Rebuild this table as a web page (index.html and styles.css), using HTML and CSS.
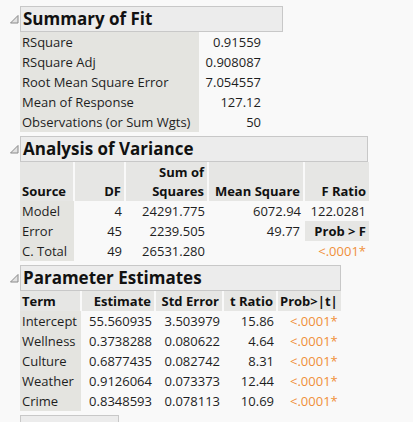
FILE: index.html
```html
<!DOCTYPE html>
<html>
<head>
<meta charset="utf-8">
<link rel="stylesheet" href="styles.css">
</head>
<body>
<div class="report">
  <section class="outline">
    <div class="head">
      <svg class="tri" width="9" height="9" viewBox="0 0 9 9"><polygon points="0.5,8 8,8 8,0.5" /></svg>
      <div class="title w-fit">Summary of Fit</div>
    </div>
    <table class="tbl fit">
      <tr><td class="lab">RSquare</td><td class="num">0.91559</td></tr>
      <tr><td class="lab">RSquare Adj</td><td class="num">0.908087</td></tr>
      <tr><td class="lab">Root Mean Square Error</td><td class="num">7.054557</td></tr>
      <tr><td class="lab">Mean of Response</td><td class="num">127.12</td></tr>
      <tr><td class="lab">Observations (or Sum Wgts)</td><td class="num">50</td></tr>
    </table>
  </section>

  <section class="outline">
    <div class="head">
      <svg class="tri" width="9" height="9" viewBox="0 0 9 9"><polygon points="0.5,8 8,8 8,0.5" /></svg>
      <div class="title w-aov">Analysis of Variance</div>
    </div>
    <table class="tbl aov">
      <tr class="hdr two">
        <th class="c-src left">Source</th>
        <th class="c-df">DF</th>
        <th class="c-ss">Sum of<br>Squares</th>
        <th class="c-ms">Mean Square</th>
        <th class="c-f">F Ratio</th>
      </tr>
      <tr><td class="lab">Model</td><td class="num">4</td><td class="num">24291.775</td><td class="num">6072.94</td><td class="num">122.0281</td></tr>
      <tr><td class="lab">Error</td><td class="num">45</td><td class="num">2239.505</td><td class="num">49.77</td><td class="num boxed">Prob &gt; F</td></tr>
      <tr><td class="lab">C. Total</td><td class="num">49</td><td class="num">26531.280</td><td class="num"></td><td class="num sig">&lt;.0001*</td></tr>
    </table>
  </section>

  <section class="outline">
    <div class="head">
      <svg class="tri" width="9" height="9" viewBox="0 0 9 9"><polygon points="0.5,8 8,8 8,0.5" /></svg>
      <div class="title w-pe">Parameter Estimates</div>
    </div>
    <table class="tbl pe">
      <tr class="hdr">
        <th class="c-term left">Term</th>
        <th class="c-est">Estimate</th>
        <th class="c-se">Std Error</th>
        <th class="c-t">t Ratio</th>
        <th class="c-p">Prob&gt;|t|</th>
      </tr>
      <tr><td class="lab">Intercept</td><td class="num">55.560935</td><td class="num">3.503979</td><td class="num">15.86</td><td class="num sig">&lt;.0001*</td></tr>
      <tr><td class="lab">Wellness</td><td class="num">0.3738288</td><td class="num">0.080622</td><td class="num">4.64</td><td class="num sig">&lt;.0001*</td></tr>
      <tr><td class="lab">Culture</td><td class="num">0.6877435</td><td class="num">0.082742</td><td class="num">8.31</td><td class="num sig">&lt;.0001*</td></tr>
      <tr><td class="lab">Weather</td><td class="num">0.9126064</td><td class="num">0.073373</td><td class="num">12.44</td><td class="num sig">&lt;.0001*</td></tr>
      <tr><td class="lab">Crime</td><td class="num">0.8348593</td><td class="num">0.078113</td><td class="num">10.69</td><td class="num sig">&lt;.0001*</td></tr>
    </table>
  </section>

  <section class="outline">
    <div class="head">
      <div class="title w-next">&nbsp;</div>
    </div>
  </section>
</div>
</body>
</html>
```

FILE: styles.css
```css
html, body {
  margin: 0;
  padding: 0;
  background: #f9f9f9;
  overflow: hidden;
}
body {
  font-family: "Open Sans", "Noto Sans", sans-serif;
  font-size: 13px;
  color: #1e1e1e;
}
.report {
  padding: 6px 0 0 20px;
}
.outline {
  margin-bottom: 4px;
}
.head {
  position: relative;
  display: flex;
}
.tri {
  position: absolute;
  left: -10px;
  top: 9px;
}
.tri polygon {
  fill: #e2e2e2;
  stroke: #8a8a8a;
  stroke-width: 1;
}
.title {
  box-sizing: border-box;
  height: 26px;
  line-height: 23px;
  padding-left: 2px;
  background: #ececec;
  border: 1px solid #c8c8c8;
  font-weight: bold;
  font-size: 17px;
  color: #111;
  white-space: nowrap;
}
.w-fit { width: 263px; }
.w-aov { width: 348px; }
.w-pe { width: 321px; }
.w-next { width: 99px; }

.tbl {
  border-collapse: collapse;
  border-spacing: 0;
}
.tbl td, .tbl th {
  padding: 0 3px 0 2px;
  height: 20px;
  line-height: 20px;
  white-space: nowrap;
}
.tbl .lab {
  background: #e4e4e0;
  text-align: left;
}
.tbl .num {
  text-align: right;
}
.tbl th {
  background: #e6e6e4;
  font-weight: bold;
  text-align: right;
  vertical-align: bottom;
  color: #111;
}
.tbl th + th {
  border-left: 2px solid #f9f9f9;
}
.tbl th.left {
  text-align: left;
}
.hdr.two th {
  line-height: 19px;
  height: 39px;
  padding-bottom: 0;
}
.sig {
  color: #f0903a;
}
.tbl .boxed {
  font-weight: bold;
  background: #e6e6e4;
  border-left: 2px solid #f9f9f9;
  color: #111;
}

.fit .lab { width: 174px; }
.fit .num { width: 60px; }

.aov .c-src { width: 48px; }
.aov .c-df { width: 44px; }
.aov .c-ss { width: 76px; }
.aov .c-ms { width: 89px; }
.aov .c-f { width: 59px; }

.pe .c-term { width: 55px; }
.pe .c-est { width: 67px; }
.pe .c-se { width: 61px; }
.pe .c-t { width: 47px; }
.pe .c-p { width: 57px; }
```
